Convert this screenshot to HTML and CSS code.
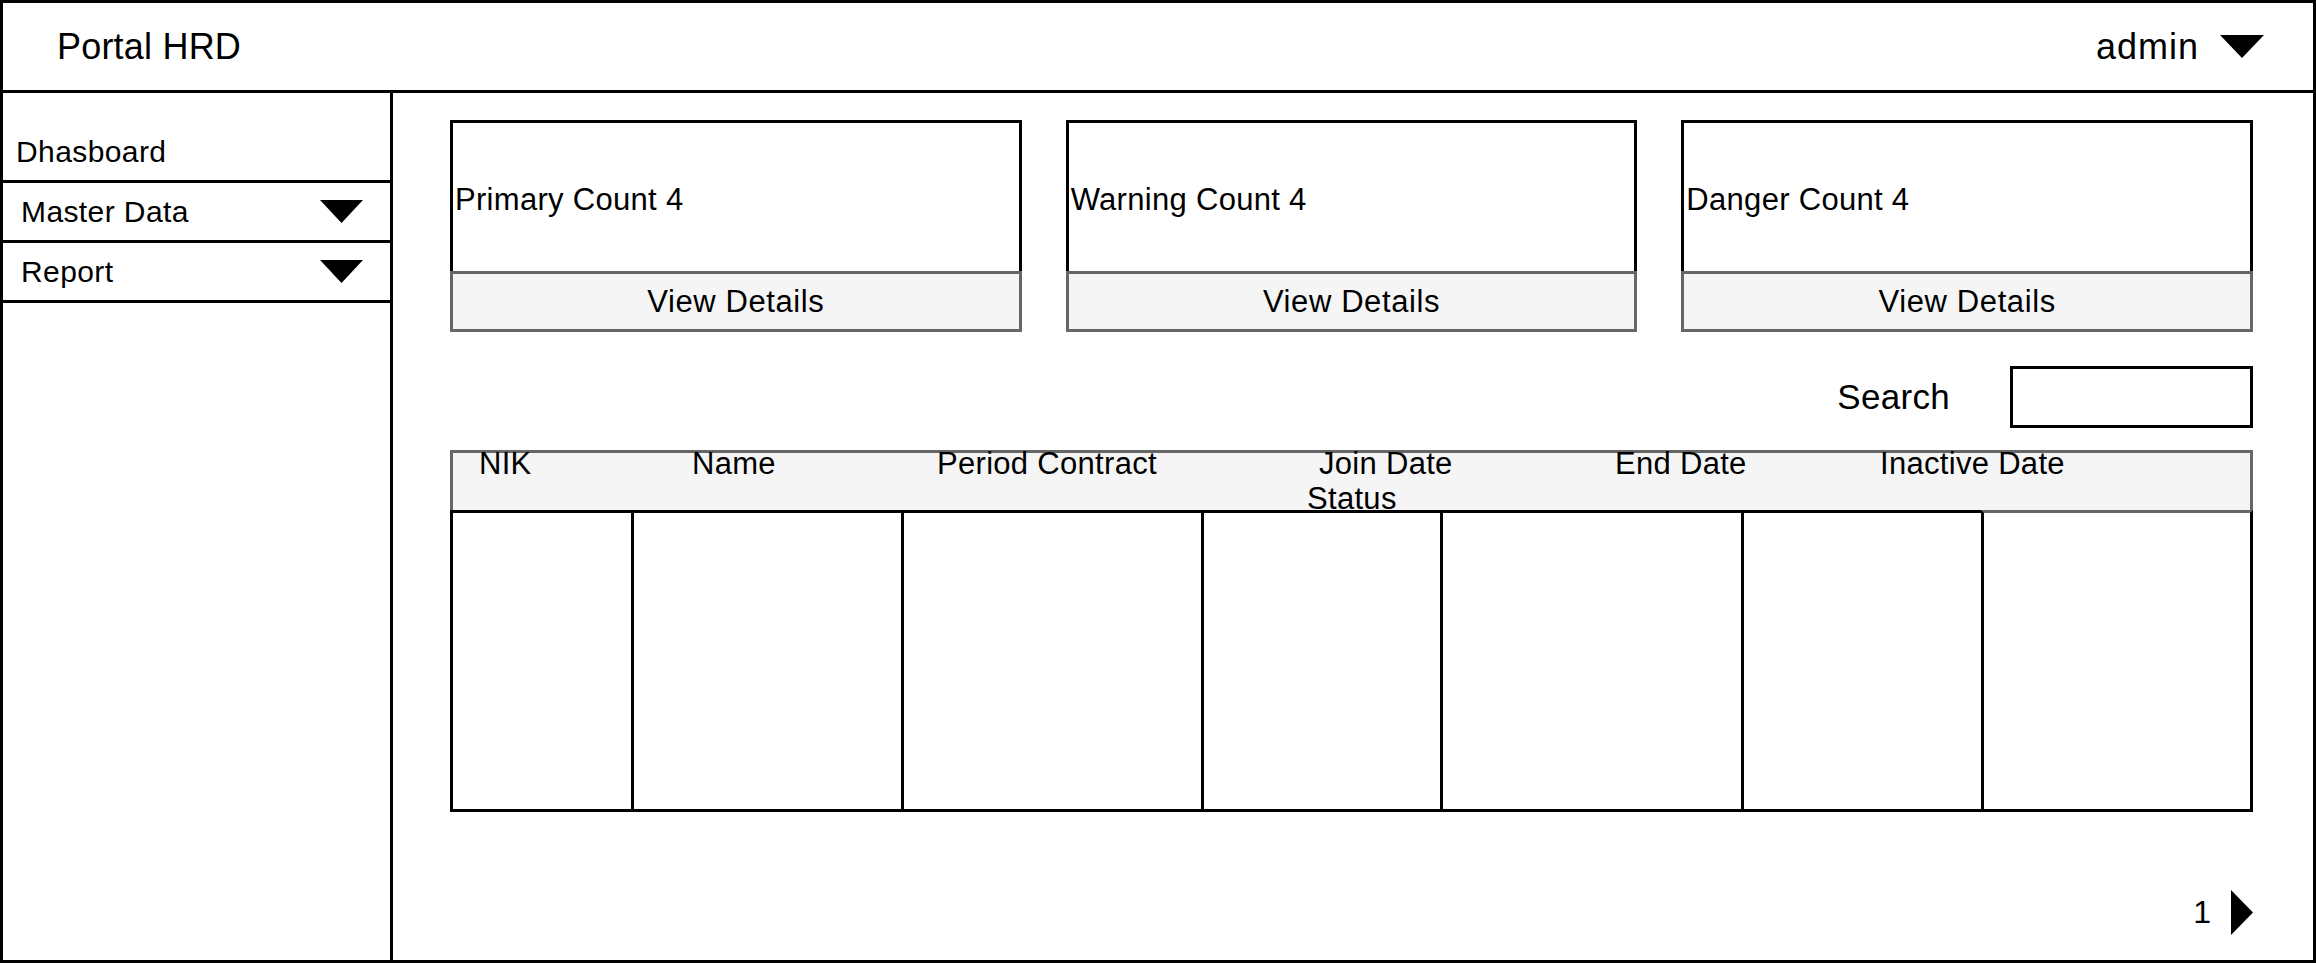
FILE: index.html
```html
<!DOCTYPE html>
<html lang="en">
<head>
<meta charset="utf-8">
<title>Portal HRD</title>
<link rel="stylesheet" href="styles.css">
</head>
<body>
<div class="frame">
  <header class="topbar">
    <div class="brand">Portal HRD</div>
    <div class="user">
      <span class="user-name">admin</span>
      <svg class="caret-down" width="44" height="23" viewBox="0 0 44 23"><polygon points="0,0 44,0 22,23" fill="#000"/></svg>
    </div>
  </header>
  <div class="layout">
    <aside class="sidebar">
      <div class="nav-item nav-dash">Dhasboard</div>
      <div class="nav-item nav-drop">
        <span>Master Data</span>
        <svg class="caret-down" width="43" height="23" viewBox="0 0 43 23"><polygon points="0,0 43,0 21.5,23" fill="#000"/></svg>
      </div>
      <div class="nav-item nav-drop">
        <span>Report</span>
        <svg class="caret-down" width="43" height="23" viewBox="0 0 43 23"><polygon points="0,0 43,0 21.5,23" fill="#000"/></svg>
      </div>
    </aside>
    <main class="main">
      <div class="cards">
        <div class="card">
          <div class="card-body">Primary Count 4</div>
          <div class="card-foot">View Details</div>
        </div>
        <div class="card">
          <div class="card-body">Warning Count 4</div>
          <div class="card-foot">View Details</div>
        </div>
        <div class="card">
          <div class="card-body">Danger Count 4</div>
          <div class="card-foot">View Details</div>
        </div>
      </div>
      <div class="search-row">
        <span class="search-label">Search</span>
        <div class="search-box"></div>
      </div>
      <div class="table">
        <div class="thead">
          <div class="th th-nik">NIK</div>
          <div class="th th-name">Name</div>
          <div class="th th-period">Period Contract</div>
          <div class="th th-join"><div class="join-line">Join Date</div><div>Status</div></div>
          <div class="th th-end">End Date</div>
          <div class="th th-inactive">Inactive Date</div>
        </div>
        <div class="tbody">
          <div class="td td-1"></div>
          <div class="td td-2"></div>
          <div class="td td-3"></div>
          <div class="td td-4"></div>
          <div class="td td-5"></div>
          <div class="td td-6"></div>
          <div class="td td-7"></div>
        </div>
      </div>
      <div class="pager">
        <span>1</span>
        <svg class="caret-right" width="22" height="45" viewBox="0 0 22 45"><polygon points="0,0 22,22.5 0,45" fill="#000"/></svg>
      </div>
    </main>
  </div>
</div>
</body>
</html>
```

FILE: styles.css
```css
* { box-sizing: border-box; }
html, body { margin: 0; padding: 0; }
body {
  font-family: "Liberation Sans", Arial, Helvetica, sans-serif;
  color: #000;
  background: #fff;
}
.frame {
  width: 2316px;
  height: 963px;
  border: 3px solid #000;
  display: flex;
  flex-direction: column;
}
.topbar {
  flex: none;
  height: 90px;
  border-bottom: 3px solid #000;
  display: flex;
  align-items: center;
  justify-content: space-between;
  padding: 0 49px 0 54px;
  font-size: 36px;
  letter-spacing: 0.2px;
}
.user {
  display: flex;
  align-items: center;
  gap: 21px;
}
.user-name { letter-spacing: 1px; }
.caret-down, .caret-right { display: block; flex: none; }
.layout {
  flex: 1;
  display: flex;
  min-height: 0;
}
.sidebar {
  flex: none;
  width: 390px;
  border-right: 3px solid #000;
}
.nav-item {
  border-bottom: 3px solid #000;
  font-size: 30px;
  line-height: 34px;
  letter-spacing: 0.4px;
  display: flex;
  justify-content: space-between;
  align-items: center;
}
.nav-dash {
  height: 90px;
  align-items: flex-end;
  padding: 0 0 11px 13px;
}
.nav-drop {
  height: 60px;
  padding: 0 27px 0 18px;
}
.main {
  flex: 1;
  display: flex;
  flex-direction: column;
  padding: 27px 60px 0 57px;
}
.cards {
  display: grid;
  grid-template-columns: repeat(3, 1fr);
  gap: 44px;
}
.card-body {
  height: 151px;
  border: 3px solid #000;
  border-bottom: 0;
  display: flex;
  align-items: center;
  padding: 6px 2px 0;
  font-size: 31px;
  letter-spacing: 0.3px;
}
.card-foot {
  height: 61px;
  border: 3px solid #666;
  background: #f5f5f5;
  display: flex;
  align-items: center;
  justify-content: center;
  font-size: 31px;
  letter-spacing: 0.6px;
}
.search-row {
  margin-top: 34px;
  display: flex;
  justify-content: flex-end;
  align-items: center;
  gap: 60px;
}
.search-label { font-size: 35px; letter-spacing: 0.3px; }
.search-box {
  width: 243px;
  height: 62px;
  border: 3px solid #000;
}
.table { margin-top: 22px; }
.thead {
  height: 63px;
  border: 3px solid #666;
  background: #f5f5f5;
  display: flex;
  padding-left: 26px;
  font-size: 31px;
  line-height: 35px;
  letter-spacing: 0.3px;
}
.th { margin-top: -7px; flex: none; white-space: nowrap; }
.th-nik { width: 213px; }
.th-name { width: 245px; }
.th-period { width: 370px; }
.th-join { width: 308px; }
.join-line { padding-left: 12px; }
.th-end { width: 265px; }
.th-inactive { flex: 1; }
.tbody {
  margin-top: -3px;
  height: 302px;
  display: flex;
}
.td {
  flex: none;
  border: 3px solid #000;
  border-right: 0;
}
.td-1 { width: 181px; }
.td-2 { width: 270px; }
.td-3 { width: 300px; }
.td-4 { width: 239px; }
.td-5 { width: 301px; }
.td-6 { width: 240px; }
.td-7 {
  width: 272px;
  border-right: 3px solid #000;
  border-top-color: transparent;
}
.pager {
  margin-top: 78px;
  display: flex;
  justify-content: flex-end;
  align-items: center;
  gap: 20px;
  font-size: 32px;
}
```
